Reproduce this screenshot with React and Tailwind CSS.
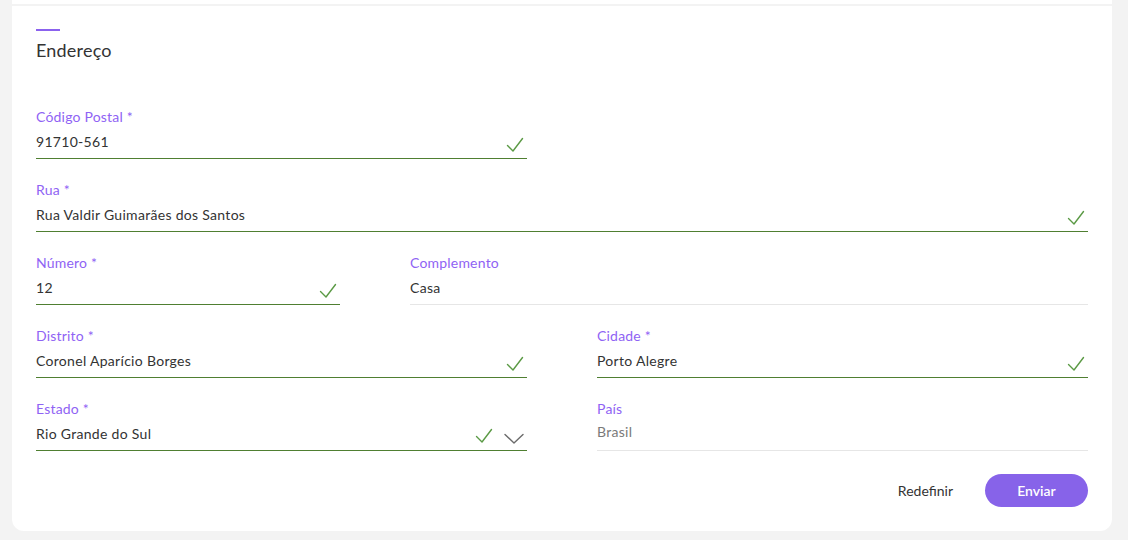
import React from "react";

const Check = () => (
  <svg width="18" height="16" viewBox="0 0 18 16" fill="none" className="shrink-0">
    <path d="M1.5 8.5 L7 14 L16.5 1.5" stroke="#5b9a45" strokeWidth="1.4" strokeLinecap="round" strokeLinejoin="round" />
  </svg>
);

const Chevron = () => (
  <svg width="20" height="12" viewBox="0 0 20 12" fill="none" className="shrink-0">
    <path d="M1 1.5 L10 10 L19 1.5" stroke="#6b6b6b" strokeWidth="1.4" strokeLinecap="round" strokeLinejoin="round" />
  </svg>
);

function Field({ label, value, valid, select, disabled }) {
  return (
    <div className="flex flex-col">
      <div className="text-[14px] leading-[18px] tracking-[0.2px] text-[#8f63f4]">{label}</div>
      <div
        className={`flex items-end justify-between border-b ${
          valid ? "border-[#4f7f31]" : "border-[#e6e6e6]"
        } ${disabled ? "mt-[4px] pb-[8px]" : "mt-[6px] pb-[6px]"}`}
      >
        <span className={`text-[14px] leading-[20px] tracking-[0.3px] ${disabled ? "text-[#7a7a7a]" : "text-[#333333]"}`}>{value}</span>
        <div className="flex items-center gap-[11px] pr-[3px] translate-y-[1px]">
          {valid && <Check />}
          {select && (
            <span className="mt-[6px]">
              <Chevron />
            </span>
          )}
        </div>
      </div>
    </div>
  );
}

export default function App() {
  return (
    <div
      className="w-[1128px] h-[540px] bg-[#f3f3f3] pl-[12px] pr-[16px] overflow-hidden"
      style={{ fontFamily: "Lato, 'Noto Sans', 'Liberation Sans', sans-serif" }}
    >
      <div className="h-[4px] bg-white" />
      <div className="mt-[2px] bg-white rounded-b-[12px] px-[24px] pt-[23px] pb-[24px]">
        <div className="h-[2px] w-[24px] bg-[#8b62ee]" />
        <h2 className="mt-[7px] text-[18px] leading-[24px] tracking-[0.2px] text-[#333333]">Endereço</h2>

        <div className="mt-[46px] flex flex-col gap-[22px]">
          <div className="grid grid-cols-2 gap-x-[70px]">
            <Field label="Código Postal *" value="91710-561" valid />
          </div>
          <Field label="Rua *" value="Rua Valdir Guimarães dos Santos" valid />
          <div className="grid grid-cols-[304px_1fr] gap-x-[70px]">
            <Field label="Número *" value="12" valid />
            <Field label="Complemento" value="Casa" />
          </div>
          <div className="grid grid-cols-2 gap-x-[70px]">
            <Field label="Distrito *" value="Coronel Aparício Borges" valid />
            <Field label="Cidade *" value="Porto Alegre" valid />
          </div>
          <div className="grid grid-cols-2 gap-x-[70px]">
            <Field label="Estado *" value="Rio Grande do Sul" valid select />
            <Field label="País" value="Brasil" disabled />
          </div>
        </div>

        <div className="mt-[23px] flex items-center justify-end gap-[32px]">
          <button className="text-[14px] leading-[20px] text-[#333333]">Redefinir</button>
          <button className="h-[33px] w-[103px] rounded-full bg-[#8763e9] text-[14px] font-semibold text-white">
            Enviar
          </button>
        </div>
      </div>
    </div>
  );
}
